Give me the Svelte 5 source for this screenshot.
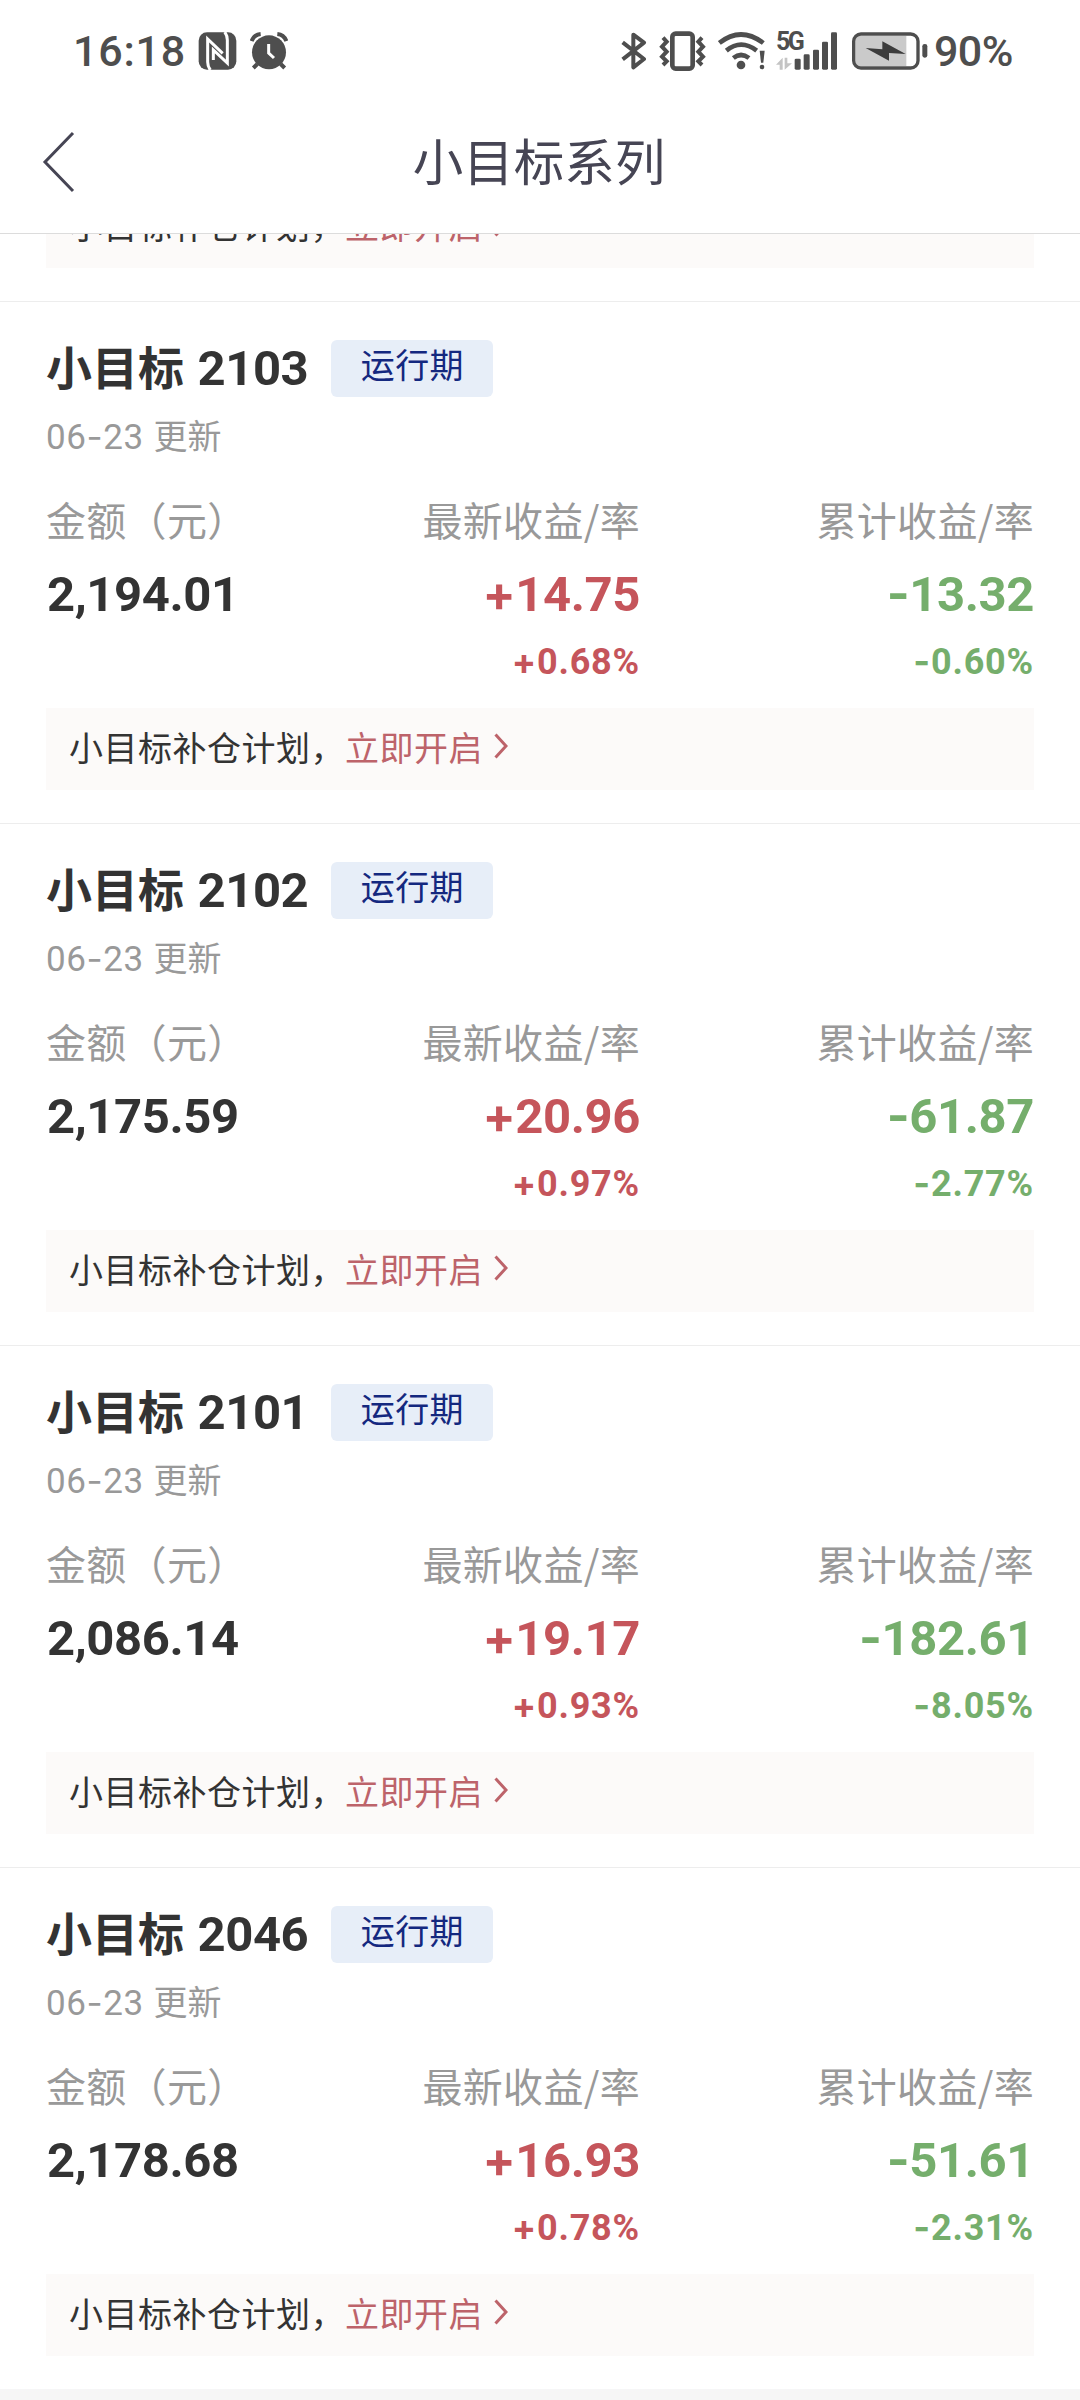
<script lang="ts">
	type Goal = {
		code: string;
		amount: string;
		latest: string;
		latestRate: string;
		total: string;
		totalRate: string;
	};

	const goals: Goal[] = [
		{ code: '2103', amount: '2,194.01', latest: '+14.75', latestRate: '+0.68%', total: '-13.32', totalRate: '-0.60%' },
		{ code: '2102', amount: '2,175.59', latest: '+20.96', latestRate: '+0.97%', total: '-61.87', totalRate: '-2.77%' },
		{ code: '2101', amount: '2,086.14', latest: '+19.17', latestRate: '+0.93%', total: '-182.61', totalRate: '-8.05%' },
		{ code: '2046', amount: '2,178.68', latest: '+16.93', latestRate: '+0.78%', total: '-51.61', totalRate: '-2.31%' }
	];
</script>

{#snippet signed(value: string)}
	<span class="sign">{value[0]}</span>{value.slice(1)}
{/snippet}

{#snippet plan()}
	<div class="plan">
		<span>小目标补仓计划，</span>
		<a class="plan-link" href="#plan">立即开启</a>
		<svg class="plan-arrow" width="14" height="26" viewBox="0 0 14 26">
			<path d="M1.5 1.5 12 13 1.5 24.5" />
		</svg>
	</div>
{/snippet}

<div class="screen">
	<div class="status">
		<span class="time">16:18</span>
		<svg class="nfc" width="39" height="38" viewBox="0 0 117 114">
			<rect x="2" y="1" width="113" height="112" rx="25" fill="#4e4e4e" />
			<path d="M37 114Q29 103 29 90V21L74 64M80 0Q88 10 88 24V93L46 54V84" fill="none" stroke="#fff" stroke-width="9" />
		</svg>
		<svg class="alarm" width="38" height="38" viewBox="0 0 114 114">
			<circle cx="57" cy="61" r="51" fill="#4e4e4e" />
			<path d="M5 27Q12 8 32 6M109 27Q102 8 82 6M22 96 10 108M92 96 104 108" fill="none" stroke="#4e4e4e" stroke-width="12" />
			<path d="M56 36V63L72 78" fill="none" stroke="#fff" stroke-width="9" />
		</svg>
		<span class="spacer"></span>
		<svg class="bluetooth" width="26" height="38" viewBox="0 0 78 114">
			<path d="M5 31 69 81 37 106V8L69 32 5 82" fill="none" stroke="#4e4e4e" stroke-width="12" stroke-linejoin="round" />
		</svg>
		<svg class="vibrate" width="47" height="40" viewBox="0 0 141 120">
			<rect x="40" y="8" width="61" height="105" rx="10" fill="none" stroke="#4e4e4e" stroke-width="14" />
			<path d="M12 20 23 32 9 47 23 62 9 77 23 91 12 102M129 20 118 32 132 47 118 62 132 77 118 91 129 102" fill="none" stroke="#4e4e4e" stroke-width="12" />
		</svg>
		<svg class="wifi" width="47" height="38" viewBox="0 0 141 114">
			<path d="M4 33Q68-18 136 33M25 56Q69 20 116 56M46 78Q69 60 93 78" fill="none" stroke="#4e4e4e" stroke-width="14" />
			<circle cx="69" cy="99" r="13" fill="#4e4e4e" />
			<path d="M125 56H140L136 92H129Z" fill="#4e4e4e" />
			<circle cx="132" cy="105" r="7" fill="#4e4e4e" />
		</svg>
		<div class="signal">
			<div class="network">
				<span>5G</span>
				<svg width="16" height="13" viewBox="0 0 48 39">
					<path d="M0 23 20 2V38H11V23ZM26 2H34V19H48L26 38Z" fill="#c4c4c4" />
				</svg>
			</div>
			<svg class="bars" width="44" height="38" viewBox="0 0 132 114" fill="#4e4e4e">
				<rect x="2" y="80" width="18" height="33" rx="4" />
				<rect x="29" y="67" width="18" height="46" rx="4" />
				<rect x="57" y="53" width="18" height="60" rx="4" />
				<rect x="84" y="29" width="18" height="84" rx="4" />
				<rect x="111" y="1" width="18" height="112" rx="4" />
			</svg>
		</div>
		<svg class="battery" width="76" height="38" viewBox="0 0 228 114">
			<path d="M10 12H163V102H10Z" fill="#cacaca" />
			<rect x="5" y="6" width="193" height="102" rx="22" fill="none" stroke="#4e4e4e" stroke-width="10" />
			<rect x="211" y="36" width="15" height="41" rx="7" fill="#4e4e4e" />
			<path d="M41 48 91 52V28L161 66 111 63V86Z" fill="#3c3c3c" />
		</svg>
		<span class="percent">90%</span>
	</div>

	<header>
		<svg class="back" width="34" height="62" viewBox="0 0 34 62">
			<path d="M31 2 3 31 31 60" />
		</svg>
		<h1>小目标系列</h1>
	</header>

	<main>
		<section class="previous">
			{@render plan()}
		</section>

		{#each goals as goal}
			<section class="goal">
				<div class="title">
					<h2>小目标 <span class="code">{goal.code}</span></h2>
					<span class="badge">运行期</span>
				</div>
				<p class="date"><span class="day">06<span class="sign">-</span>23</span> 更新</p>

				<div class="stats">
					<div class="stat">
						<span class="label">金额（元）</span>
						<span class="value">{goal.amount}</span>
					</div>
					<div class="stat right up">
						<span class="label">最新收益/率</span>
						<span class="value">{@render signed(goal.latest)}</span>
						<span class="rate">{@render signed(goal.latestRate)}</span>
					</div>
					<div class="stat right down">
						<span class="label">累计收益/率</span>
						<span class="value">{@render signed(goal.total)}</span>
						<span class="rate">{@render signed(goal.totalRate)}</span>
					</div>
				</div>

				{@render plan()}
			</section>
		{/each}
	</main>
</div>

<style>
	:global(body) {
		background: #fff;
	}

	.screen {
		display: flex;
		flex-direction: column;
		width: 1080px;
		height: 2400px;
		overflow: hidden;
		background: #f6f6f6;
		font-family: 'Noto Sans CJK SC', sans-serif;
		color: #333;
	}

	.status {
		display: flex;
		align-items: center;
		flex: none;
		height: 102px;
		padding: 0 67px 0 73px;
		background: #fff;
		color: #4e4e4e;
		font-family: Roboto, sans-serif;
		font-weight: 500;
	}

	.status svg {
		flex: none;
	}

	.time {
		width: 125px;
		font-size: 43px;
		letter-spacing: 0.8px;
	}

	.alarm {
		margin-left: 13px;
	}

	.spacer {
		flex: 1;
	}

	.vibrate {
		margin-left: 12px;
	}

	.wifi {
		margin-left: 12px;
	}

	.signal {
		display: flex;
		margin-left: 11px;
	}

	.network {
		display: flex;
		flex-direction: column;
		justify-content: space-between;
		width: 18px;
		height: 38px;
	}

	.network span {
		font-size: 25px;
		font-weight: 700;
		line-height: 19px;
		letter-spacing: -2.5px;
	}

	.battery {
		margin-left: 14px;
	}

	.percent {
		width: 79px;
		margin-left: 6px;
		font-size: 43px;
		letter-spacing: -0.6px;
	}

	header {
		display: flex;
		align-items: center;
		flex: none;
		height: 131px;
		padding: 0 42px;
		border-bottom: 1px solid #dcdcdc;
		background: #fff;
		color: #464554;
	}

	.back {
		flex: none;
		margin-top: -12px;
	}

	.back path {
		fill: none;
		stroke: #464554;
		stroke-width: 3;
	}

	h1 {
		flex: 1;
		margin: -17px 36px 0 0;
		font-size: 50.5px;
		font-weight: 400;
		line-height: 60px;
		text-align: center;
	}

	main {
		flex: 1;
		overflow: hidden;
	}

	.previous {
		margin-top: -48px;
		padding: 0 46px 33px;
		background: #fff;
	}

	.goal {
		box-sizing: border-box;
		height: 522px;
		padding: 38px 46px 0;
		border-top: 1px solid #ededed;
		background: #fff;
	}

	.title {
		display: flex;
		align-items: center;
		gap: 23px;
		height: 57px;
	}

	h2 {
		height: 60px;
		margin: 0;
		font-size: 46px;
		font-weight: 700;
		line-height: 53px;
		white-space: nowrap;
	}

	.code {
		margin-left: 3px;
		font-family: Roboto, sans-serif;
		font-size: 49px;
		line-height: 0;
		letter-spacing: -0.4px;
	}

	.badge {
		width: 162px;
		height: 57px;
		border-radius: 6px;
		background: #e7eef8;
		color: #14287f;
		font-size: 34px;
		line-height: 48px;
		letter-spacing: 0.3px;
		text-align: center;
	}

	.date {
		height: 50px;
		margin: 14px 0 0;
		color: #999;
		font-size: 34px;
		line-height: 47px;
	}

	.day {
		margin-right: 2px;
		font-family: Roboto, sans-serif;
		font-size: 35px;
		line-height: 0;
		letter-spacing: 0.6px;
	}

	.sign {
		font-family: Inter, sans-serif;
		line-height: 0;
	}

	.stats {
		display: grid;
		grid-template-columns: 297px 297px 394px;
		height: 191px;
		margin-top: 32px;
	}

	.stat {
		display: flex;
		flex-direction: column;
	}

	.right {
		align-items: flex-end;
	}

	.label {
		height: 56px;
		color: #999;
		font-size: 40px;
		line-height: 53px;
		letter-spacing: 0.3px;
	}

	.value {
		margin-top: 16px;
		padding-left: 1px;
		font-family: Roboto, sans-serif;
		font-size: 49px;
		font-weight: 700;
		line-height: 60px;
		letter-spacing: -0.4px;
	}

	.rate {
		margin-top: 15px;
		font-family: Roboto, sans-serif;
		font-size: 36px;
		font-weight: 700;
		line-height: 44px;
		letter-spacing: 0.8px;
	}

	.up .value,
	.up .rate {
		color: #c5555b;
	}

	.down .value,
	.down .rate {
		color: #75ae6c;
	}

	.plan {
		display: flex;
		align-items: center;
		box-sizing: border-box;
		height: 82px;
		margin-top: 24px;
		padding: 0 23px 6px;
		background: #fcfaf9;
		font-size: 34px;
		letter-spacing: 0.5px;
	}

	.previous .plan {
		margin-top: 0;
	}

	.plan-link {
		color: #bd636a;
		text-decoration: none;
	}

	.plan-arrow {
		margin-left: 11px;
	}

	.plan-arrow path {
		fill: none;
		stroke: #bd636a;
		stroke-width: 3;
	}
</style>
